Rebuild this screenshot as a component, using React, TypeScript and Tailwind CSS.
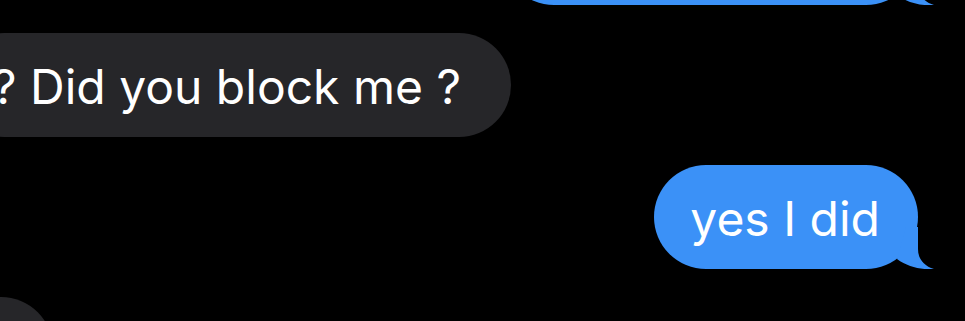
import React from 'react';

const BLUE = 'bg-[#3b91f7]';

function Tail() {
  return (
    <svg
      className="absolute right-[-16px] bottom-0 w-[68px] h-[52px] fill-[#3b91f7]"
      viewBox="0 0 68 52"
    >
      <path d="M52 10 L52 32 C52 42 58 49 68 52 C55 53 42 50 31 42 L40 10 Z" />
    </svg>
  );
}

function SentBubble({ text, className = '' }: { text: string; className?: string }) {
  return (
    <div
      className={`relative h-[104px] rounded-full ${BLUE} flex items-center pl-[36px] pr-[38px] pt-[4px] text-white text-[48px] whitespace-nowrap ${className}`}
    >
      <span className="relative z-10">{text}</span>
      <Tail />
    </div>
  );
}

function ReceivedBubble({ text, className = '' }: { text: string; className?: string }) {
  return (
    <div
      className={`h-[104px] shrink-0 rounded-full bg-[#262629] flex items-center justify-end pl-[40px] pr-[50px] pt-[3px] text-white text-[48px] whitespace-nowrap ${className}`}
    >
      {text}
    </div>
  );
}

export default function App() {
  return (
    <div
      className="w-[965px] h-[321px] bg-black overflow-hidden flex flex-col gap-[28px]"
      style={{ fontFamily: 'Inter, "Liberation Sans", sans-serif' }}
    >
      <div className="flex justify-end pr-[47px] -mt-[99px]">
        <SentBubble text="" className="w-[416px]" />
      </div>

      <div className="flex justify-end w-[511px]">
        <ReceivedBubble text="? Did you block me ?" />
      </div>

      <div className="flex justify-end pr-[47px]">
        <SentBubble text="yes I did" />
      </div>

      <div className="flex justify-end w-[53px]">
        <ReceivedBubble text="" className="w-[240px]" />
      </div>
    </div>
  );
}
